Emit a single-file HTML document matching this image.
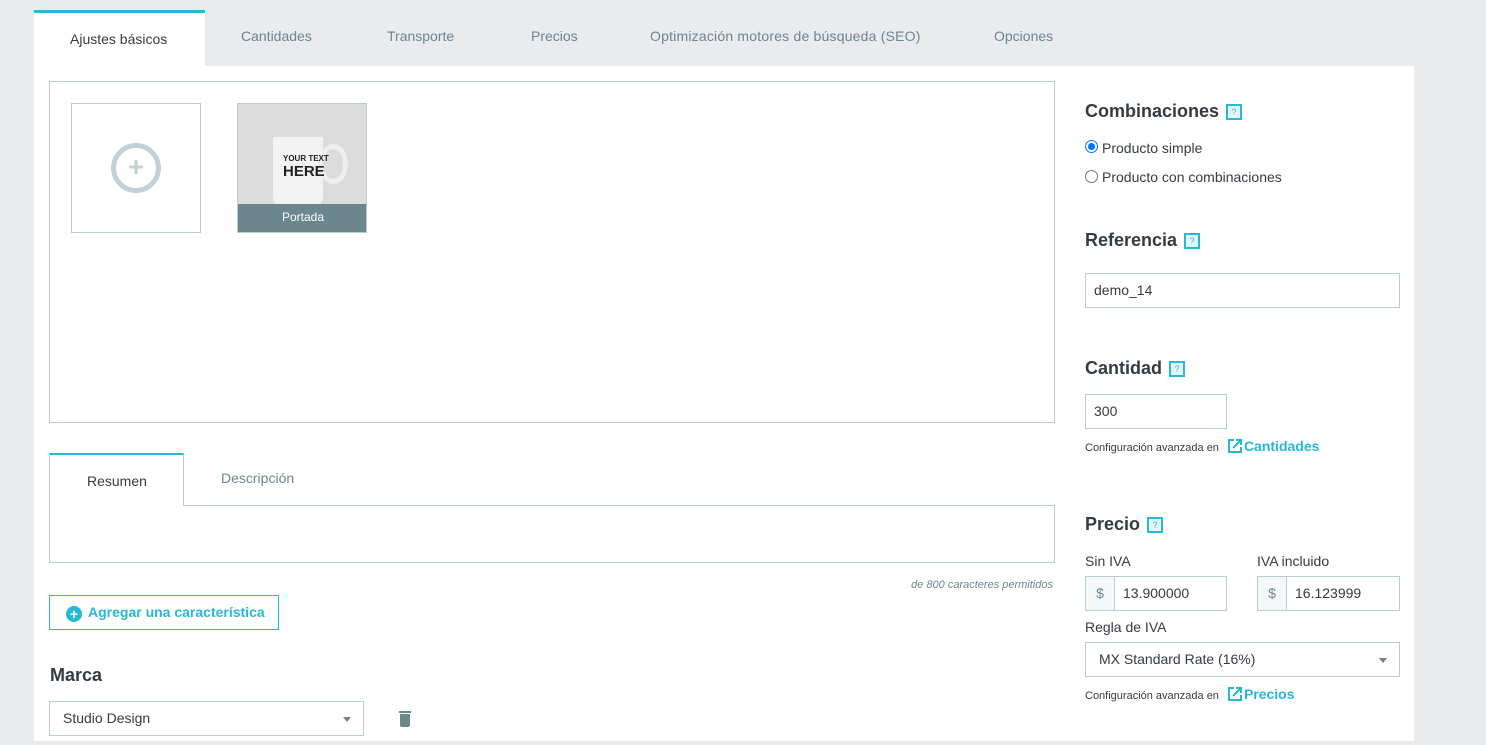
<!DOCTYPE html>
<html><head><meta charset="utf-8"><style>
*{box-sizing:border-box;margin:0;padding:0}
body{width:1486px;height:745px;background:#eaebed;font-family:"Liberation Sans",sans-serif;color:#363a41;position:relative;overflow:hidden;font-size:14px}
.a{position:absolute}
.tab{position:absolute;top:28px;font-size:14px;color:#6c868e}
.panel{position:absolute;left:34px;top:66px;width:1380px;height:675px;background:#fff}
.box{position:absolute;border:1px solid #bbcdd2;background:#fff}
h3{position:absolute;font-size:18px;font-weight:bold;color:#363a41}
.q{display:inline-block;width:16px;height:16px;border:2px solid #25b9d7;background:#e6f6fa;color:#25b9d7;font-size:9px;text-align:center;line-height:12px;vertical-align:middle;margin-left:7px;font-weight:normal}
.inp{position:absolute;border:1px solid #bbcdd2;height:35px;padding:0 8px;line-height:33px;font-size:14px;background:#fff}
.small{position:absolute;font-size:11px;color:#363a41}
.lnk{color:#25b9d7;font-size:14px;font-weight:bold}
.ext{display:inline-block;vertical-align:-3px;margin:0 1px 0 8px}
.caret{position:absolute;right:12px;top:15px;border-left:4px solid transparent;border-right:4px solid transparent;border-top:5px solid #6c868e}
</style></head><body>
<div class="a" style="left:34px;top:10px;width:171px;height:56px;background:#fff;border-top:3px solid #25b9d7"></div>
<div class="tab" style="left:70px;top:31px;color:#363a41">Ajustes básicos</div>
<div class="tab" style="left:241px">Cantidades</div>
<div class="tab" style="left:387px">Transporte</div>
<div class="tab" style="left:531px">Precios</div>
<div class="tab" style="left:650px;letter-spacing:0.2px">Optimización motores de búsqueda (SEO)</div>
<div class="tab" style="left:994px">Opciones</div>
<div class="panel"></div>

<div class="box" style="left:49px;top:81px;width:1006px;height:342px"></div>
<div class="box" style="left:71px;top:103px;width:130px;height:130px"></div>
<div class="a" style="left:111px;top:143px;width:50px;height:50px;border:5px solid #c2d1d6;border-radius:50%;color:#c2d1d6;font-size:28px;text-align:center;line-height:38px;font-weight:bold">+</div>
<div class="box" style="left:237px;top:103px;width:130px;height:130px;background:#dcdcdc;overflow:hidden">
<div class="a" style="left:35px;top:33px;width:50px;height:70px;background:#f3f3f3;border-radius:2px 2px 10px 10px"></div>
<div class="a" style="left:80px;top:40px;width:30px;height:40px;border:5px solid #eee;border-radius:50%"></div>
<div class="a" style="left:45px;top:50px;font-size:8px;font-weight:bold;color:#222;line-height:10px">YOUR TEXT<br><span style="font-size:15px;line-height:16px">HERE</span></div>
<div class="a" style="left:0;top:100px;width:130px;height:29px;background:#6c868e;color:#fff;font-size:12px;text-align:center;line-height:27px">Portada</div>
</div>

<div class="a" style="left:49px;top:453px;width:135px;height:53px;background:#fff;border:1px solid #bbcdd2;border-top:2px solid #25b9d7;border-bottom:none;z-index:2"></div>
<div class="a" style="left:87px;top:473px;z-index:3">Resumen</div>
<div class="a" style="left:221px;top:470px;color:#6c868e">Descripción</div>
<div class="box" style="left:49px;top:505px;width:1006px;height:58px"></div>
<div class="a" style="right:433px;top:579px;font-size:11px;font-style:italic;color:#6c868e">de 800 caracteres permitidos</div>

<div class="a" style="left:49px;top:595px;width:230px;height:35px;border:1px solid #25b9d7;color:#25b9d7;font-weight:bold;line-height:33px;padding-left:16px"><span style="display:inline-block;width:16px;height:16px;border-radius:50%;background:#25b9d7;color:#fff;text-align:center;line-height:16px;font-size:14px;vertical-align:-2px;margin-right:6px">+</span>Agregar una característica</div>
<h3 style="left:50px;top:665px">Marca</h3>
<div class="inp" style="left:49px;top:701px;width:315px;padding-left:13px">Studio Design<div class="caret"></div></div>
<div class="a" style="left:399px;top:711px;width:12px;height:2px;background:#6c868e"></div>
<div class="a" style="left:400px;top:714px;width:10px;height:13px;background:#6c868e;border-radius:0 0 2px 2px"></div>

<h3 style="left:1085px;top:101px">Combinaciones<span class="q">?</span></h3>
<div class="a" style="left:1085px;top:140px;width:13px;height:13px;border-radius:50%;border:1px solid #0075ff;background:#fff"><div style="margin:2px;width:7px;height:7px;border-radius:50%;background:#0075ff"></div></div>
<div class="a" style="left:1102px;top:140px">Producto simple</div>
<div class="a" style="left:1085px;top:170px;width:13px;height:13px;border-radius:50%;border:1px solid #767676"></div>
<div class="a" style="left:1102px;top:169px">Producto con combinaciones</div>

<h3 style="left:1085px;top:230px">Referencia<span class="q">?</span></h3>
<div class="inp" style="left:1085px;top:273px;width:315px">demo_14</div>

<h3 style="left:1085px;top:358px">Cantidad<span class="q">?</span></h3>
<div class="inp" style="left:1085px;top:394px;width:142px">300</div>
<div class="small" style="left:1085px;top:438px">Configuración avanzada en<svg class="ext" width="16" height="16" viewBox="0 0 16 16"><path d="M7 2H2v12h12V9" fill="none" stroke="#25b9d7" stroke-width="2"/><path d="M6 10L14 2M9 2h5v5" fill="none" stroke="#25b9d7" stroke-width="2"/></svg><span class="lnk">Cantidades</span></div>

<h3 style="left:1085px;top:514px">Precio<span class="q">?</span></h3>
<div class="a" style="left:1085px;top:553px">Sin IVA</div>
<div class="a" style="left:1257px;top:553px">IVA incluido</div>
<div class="inp" style="left:1085px;top:576px;width:142px;padding:0"><span style="display:inline-block;width:29px;text-align:center;color:#6c868e;border-right:1px solid #bbcdd2;background:#f5f8f9;height:33px">$</span><span style="padding-left:8px">13.900000</span></div>
<div class="inp" style="left:1257px;top:576px;width:143px;padding:0"><span style="display:inline-block;width:29px;text-align:center;color:#6c868e;border-right:1px solid #bbcdd2;background:#f5f8f9;height:33px">$</span><span style="padding-left:8px">16.123999</span></div>
<div class="a" style="left:1085px;top:619px">Regla de IVA</div>
<div class="inp" style="left:1085px;top:642px;width:315px;padding-left:13px">MX Standard Rate (16%)<div class="caret"></div></div>
<div class="small" style="left:1085px;top:686px">Configuración avanzada en<svg class="ext" width="16" height="16" viewBox="0 0 16 16"><path d="M7 2H2v12h12V9" fill="none" stroke="#25b9d7" stroke-width="2"/><path d="M6 10L14 2M9 2h5v5" fill="none" stroke="#25b9d7" stroke-width="2"/></svg><span class="lnk">Precios</span></div>
</body></html>
